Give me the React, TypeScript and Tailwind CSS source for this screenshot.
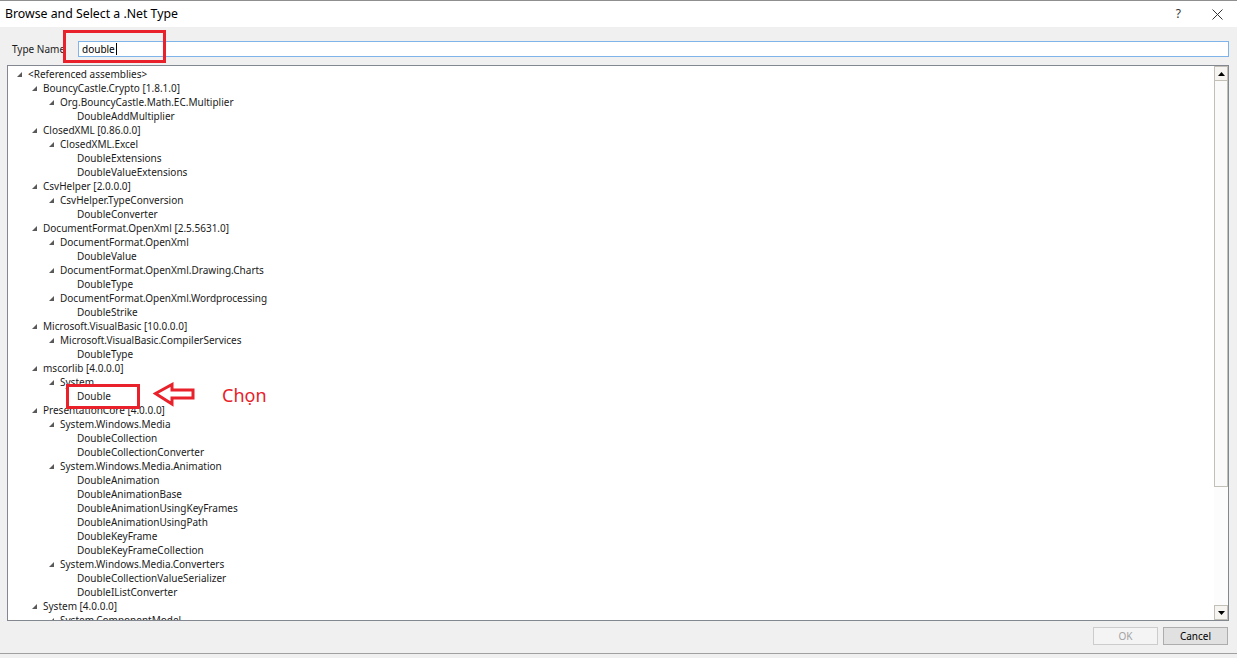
import React from 'react';

type Row = { level: number; text: string; open?: boolean };

const rows: Row[] = [
  { level: 0, text: '<Referenced assemblies>', open: true },
  { level: 1, text: 'BouncyCastle.Crypto [1.8.1.0]', open: true },
  { level: 2, text: 'Org.BouncyCastle.Math.EC.Multiplier', open: true },
  { level: 3, text: 'DoubleAddMultiplier' },
  { level: 1, text: 'ClosedXML [0.86.0.0]', open: true },
  { level: 2, text: 'ClosedXML.Excel', open: true },
  { level: 3, text: 'DoubleExtensions' },
  { level: 3, text: 'DoubleValueExtensions' },
  { level: 1, text: 'CsvHelper [2.0.0.0]', open: true },
  { level: 2, text: 'CsvHelper.TypeConversion', open: true },
  { level: 3, text: 'DoubleConverter' },
  { level: 1, text: 'DocumentFormat.OpenXml [2.5.5631.0]', open: true },
  { level: 2, text: 'DocumentFormat.OpenXml', open: true },
  { level: 3, text: 'DoubleValue' },
  { level: 2, text: 'DocumentFormat.OpenXml.Drawing.Charts', open: true },
  { level: 3, text: 'DoubleType' },
  { level: 2, text: 'DocumentFormat.OpenXml.Wordprocessing', open: true },
  { level: 3, text: 'DoubleStrike' },
  { level: 1, text: 'Microsoft.VisualBasic [10.0.0.0]', open: true },
  { level: 2, text: 'Microsoft.VisualBasic.CompilerServices', open: true },
  { level: 3, text: 'DoubleType' },
  { level: 1, text: 'mscorlib [4.0.0.0]', open: true },
  { level: 2, text: 'System', open: true },
  { level: 3, text: 'Double' },
  { level: 1, text: 'PresentationCore [4.0.0.0]', open: true },
  { level: 2, text: 'System.Windows.Media', open: true },
  { level: 3, text: 'DoubleCollection' },
  { level: 3, text: 'DoubleCollectionConverter' },
  { level: 2, text: 'System.Windows.Media.Animation', open: true },
  { level: 3, text: 'DoubleAnimation' },
  { level: 3, text: 'DoubleAnimationBase' },
  { level: 3, text: 'DoubleAnimationUsingKeyFrames' },
  { level: 3, text: 'DoubleAnimationUsingPath' },
  { level: 3, text: 'DoubleKeyFrame' },
  { level: 3, text: 'DoubleKeyFrameCollection' },
  { level: 2, text: 'System.Windows.Media.Converters', open: true },
  { level: 3, text: 'DoubleCollectionValueSerializer' },
  { level: 3, text: 'DoubleIListConverter' },
  { level: 1, text: 'System [4.0.0.0]', open: true },
  { level: 2, text: 'System.ComponentModel', open: true },
];

const indent = ['pl-[9px]', 'pl-[24px]', 'pl-[41px]', 'pl-[58px]'];

function Expander() {
  return (
    <svg width="5" height="5" viewBox="0 0 5 5" className="mt-[1px]">
      <path d="M5 0 L5 5 L0 5 Z" fill="#595959" />
    </svg>
  );
}

function TreeRow({ row }: { row: Row }) {
  return (
    <div className={`flex h-[14px] items-center ${indent[row.level]}`}>
      <div className="flex w-[11px] shrink-0 items-center">
        {row.open && <Expander />}
      </div>
      <span className="whitespace-nowrap leading-[14px]">{row.text}</span>
    </div>
  );
}

function ScrollBar() {
  return (
    <div className="flex w-[14px] shrink-0 flex-col bg-[#fcfcfc]">
      <div className="flex h-[15px] items-center justify-center border border-[#c2bfb7] bg-[#f5f4f1]">
        <svg width="7" height="4" viewBox="0 0 7 4">
          <path d="M3.5 0 L7 4 L0 4 Z" fill="#000" />
        </svg>
      </div>
      <div className="h-[406px] border-x border-b border-[#c2bfb7] bg-[#fafafa]" />
      <div className="flex-1" />
      <div className="flex h-[15px] items-center justify-center border border-[#c2bfb7] bg-[#f5f4f1]">
        <svg width="7" height="4" viewBox="0 0 7 4">
          <path d="M0 0 L7 0 L3.5 4 Z" fill="#000" />
        </svg>
      </div>
    </div>
  );
}

export default function App() {
  return (
    <div className="relative h-[658px] w-[1237px] overflow-hidden bg-[#f0f0f0] font-['Noto_Sans',sans-serif] text-[10px] text-[#1b1b1b]">
      {/* title bar */}
      <div className="flex h-[27px] items-center border-t border-[#8f8f8f] bg-white pl-[5px]">
        <span className="text-[12.3px] text-black">Browse and Select a .Net Type</span>
        <div className="ml-auto flex items-center">
          <span className="mr-[31px] text-[12px] text-[#333]">?</span>
          <svg width="11" height="11" viewBox="0 0 11 11" className="mr-[14px]">
            <path d="M0.5 0.5 L10.5 10.5 M10.5 0.5 L0.5 10.5" stroke="#333" strokeWidth="1" />
          </svg>
        </div>
      </div>

      {/* type name row */}
      <div className="flex items-center pt-[14px] pr-[8px]">
        <span className="w-[78px] shrink-0 pl-[12px]">Type Name</span>
        <div className="flex h-[16px] flex-1 items-center border border-[#7eb4ea] bg-white pl-[3px]">
          <span className="leading-[14px] text-black">double</span>
          <span className="ml-[1px] h-[12px] w-[1px] bg-black" />
        </div>
      </div>

      {/* tree */}
      <div className="mt-[8px] ml-[7px] mr-[8px] flex h-[556px] border border-[#828790] bg-white">
        <div className="flex-1 overflow-hidden pt-[1px]">
          {rows.map((r, i) => (
            <TreeRow key={i} row={r} />
          ))}
        </div>
        <ScrollBar />
      </div>

      {/* buttons */}
      <div className="mt-[6px] mr-[9px] flex justify-end gap-[5px]">
        <div className="flex h-[18px] w-[65px] items-center justify-center border border-[#cccccc] bg-[#f4f4f4] text-[#a3a3a3]">
          OK
        </div>
        <div className="flex h-[18px] w-[65px] items-center justify-center border border-[#adadad] bg-[#e1e1e1] text-black">
          Cancel
        </div>
      </div>
      <div className="mt-[8px] border-t border-[#a0a0a0]" />

      {/* annotations */}
      <div className="absolute left-[63px] top-[30px] h-[33px] w-[103px] border-[3px] border-[#e8212a]" />
      <div className="absolute left-[66px] top-[384px] h-[25px] w-[74px] border-[3px] border-[#e8212a]" />
      <svg className="absolute left-[153px] top-[382px]" width="44" height="26" viewBox="0 0 44 26">
        <path
          d="M2.5 11.5 L19 2.5 L19 8 L40 8 L40 16 L19 16 L19 22 Z"
          fill="white"
          stroke="#e8212a"
          strokeWidth="3"
          strokeLinejoin="miter"
        />
      </svg>
      <span className="absolute left-[222px] top-[384px] text-[18px] leading-[22px] text-[#e8212a]">Chọn</span>
    </div>
  );
}
